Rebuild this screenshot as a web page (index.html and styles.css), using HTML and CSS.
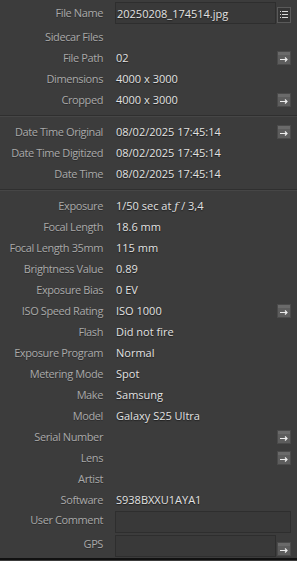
FILE: index.html
```html
<!DOCTYPE html>
<html>
<head>
  <meta charset="UTF-8">
  <title>Metadata</title>
  <link rel="stylesheet" href="styles.css">
</head>
<body>
  <div class="panel">
    <div class="row first">
      <span class="label">File Name</span>
      <span class="value box">20250208_174514.jpg</span>
      <span class="btn list">
        <svg width="14" height="16" viewBox="0 0 14 16"><rect x="0.5" y="0.5" width="13" height="15" fill="#353535" stroke="#5a5a5a"/><g fill="#d8d8d8"><rect x="3" y="4" width="1" height="1"/><rect x="5" y="4" width="6" height="1"/><rect x="3" y="7" width="1" height="1"/><rect x="5" y="7" width="6" height="1"/><rect x="3" y="10" width="1" height="1"/><rect x="5" y="10" width="6" height="1"/></g></svg>
      </span>
    </div>
    <div class="row"><span class="label">Sidecar Files</span><span class="value"></span></div>
    <div class="row"><span class="label">File Path</span><span class="value">02</span><span class="btn go"></span></div>
    <div class="row"><span class="label">Dimensions</span><span class="value">4000 x 3000</span></div>
    <div class="row"><span class="label">Cropped</span><span class="value">4000 x 3000</span><span class="btn go"></span></div>

    <div class="sep"></div>

    <div class="row"><span class="label">Date Time Original</span><span class="value">08/02/2025 17:45:14</span><span class="btn go"></span></div>
    <div class="row"><span class="label">Date Time Digitized</span><span class="value">08/02/2025 17:45:14</span></div>
    <div class="row"><span class="label">Date Time</span><span class="value">08/02/2025 17:45:14</span></div>

    <div class="sep"></div>

    <div class="row"><span class="label">Exposure</span><span class="value">1/50 sec at <i>ƒ</i> / 3,4</span></div>
    <div class="row"><span class="label">Focal Length</span><span class="value">18.6 mm</span></div>
    <div class="row"><span class="label">Focal Length 35mm</span><span class="value">115 mm</span></div>
    <div class="row"><span class="label">Brightness Value</span><span class="value">0.89</span></div>
    <div class="row"><span class="label">Exposure Bias</span><span class="value">0 EV</span></div>
    <div class="row"><span class="label">ISO Speed Rating</span><span class="value">ISO 1000</span><span class="btn go"></span></div>
    <div class="row"><span class="label">Flash</span><span class="value">Did not fire</span></div>
    <div class="row"><span class="label">Exposure Program</span><span class="value">Normal</span></div>
    <div class="row"><span class="label">Metering Mode</span><span class="value">Spot</span></div>
    <div class="row"><span class="label">Make</span><span class="value">Samsung</span></div>
    <div class="row"><span class="label">Model</span><span class="value">Galaxy S25 Ultra</span></div>
    <div class="row"><span class="label">Serial Number</span><span class="value"></span><span class="btn go"></span></div>
    <div class="row"><span class="label">Lens</span><span class="value"></span><span class="btn go"></span></div>
    <div class="row"><span class="label">Artist</span><span class="value"></span></div>
    <div class="row"><span class="label">Software</span><span class="value">S938BXXU1AYA1</span></div>
    <div class="row field"><span class="label">User Comment</span><span class="value box wide"></span></div>
    <div class="row field"><span class="label">GPS</span><span class="value box"></span><span class="btn go low"></span></div>
    <div class="edge"></div>
    <div class="row field"><span class="label"></span><span class="value box"></span></div>
  </div>

  <script>
    // same arrow glyph for every "go" button
    var arrow = '<svg width="14" height="14" viewBox="0 0 14 14">' +
      '<rect x="0.5" y="0.5" width="13" height="13" fill="#5d5d5d" stroke="#4a4a4a"/>' +
      '<rect x="1" y="1" width="12" height="3" fill="#6a6a6a"/>' +
      '<path d="M3 8.5h7M8 6.5l2 2-2 2" stroke="#ececec" stroke-width="1.2" fill="none"/>' +
      '</svg>';
    var btns = document.querySelectorAll(".btn.go");
    for (var i = 0; i < btns.length; i++) {
      btns[i].innerHTML = arrow;
    }
  </script>
</body>
</html>
```
FILE: styles.css
```css
body {
  margin: 0;
  background: #3c3c3c;
  font-family: "Open Sans", "Noto Sans", sans-serif;
  font-size: 11px;
  overflow: hidden;
}

.panel {
  width: 297px;
  height: 561px;
  padding-right: 6px;
  box-sizing: border-box;
  overflow: hidden;
}

.row {
  display: grid;
  grid-template-columns: 115px 161px 15px;
  align-items: center;
  height: 21px;
}

.row.first {
  height: 26px;
  align-items: start;
  padding-top: 2px;
  box-sizing: border-box;
}

.label {
  text-align: right;
  padding-right: 12px;
  color: #a9a9a9;
  white-space: nowrap;
  letter-spacing: -0.4px;
  text-shadow: 0 1px 0 #2c2c2c;
}

.value {
  padding-left: 1px;
  color: #e2e2e2;
  white-space: nowrap;
  text-shadow: 0 1px 1px #1e1e1e;
}

.value i {
  font-family: "DejaVu Serif", serif;
  font-style: italic;
}

.box {
  height: 22px;
  box-sizing: border-box;
  border: 1px solid #2e2e2e;
  background: #393939;
  padding: 2px 0 0 1px;
}

.row.first .label {
  padding-top: 3px;
}

.row.first .value {
  padding-top: 3px;
}

.wide {
  grid-column: 2 / 4;
}

.btn {
  display: flex;
  justify-content: flex-end;
  height: 14px;
}

.btn.list {
  height: 16px;
  margin-top: 5px;
}

.row.field {
  height: 24px;
  align-items: start;
  padding-top: 1px;
  box-sizing: border-box;
}

.row.field .label {
  padding-top: 1px;
}

.btn.low {
  margin-top: 7px;
}

.sep {
  height: 11px;
  padding-top: 5px;
  box-sizing: border-box;
}

.sep::after {
  content: "";
  display: block;
  width: 297px;
  height: 1px;
  background: #2f2f2f;
  border-bottom: 1px solid #464646;
}

.edge {
  width: 297px;
  height: 2px;
  background: #111;
}
```
